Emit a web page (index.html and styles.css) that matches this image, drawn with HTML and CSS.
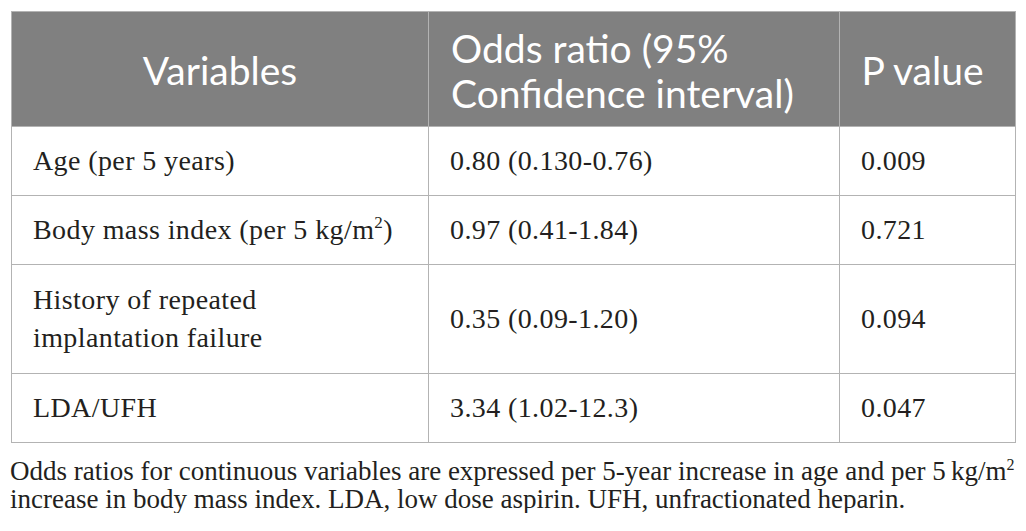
FILE: index.html
```html
<!DOCTYPE html>
<html>
<head>
<meta charset="utf-8">
<link rel="stylesheet" href="styles.css">
</head>
<body>
<div class="page">
  <table class="data">
    <colgroup>
      <col class="c1"><col class="c2"><col class="c3">
    </colgroup>
    <thead>
      <tr class="head">
        <th class="center">Variables</th>
        <th class="left">Odds ratio (95%<br>Confidence interval)</th>
        <th class="center pcol">P value</th>
      </tr>
    </thead>
    <tbody>
      <tr class="row">
        <td>Age (per 5 years)</td>
        <td>0.80 (0.130-0.76)</td>
        <td>0.009</td>
      </tr>
      <tr class="row">
        <td>Body mass index (per 5 kg/m<sup>2</sup>)</td>
        <td>0.97 (0.41-1.84)</td>
        <td>0.721</td>
      </tr>
      <tr class="row tall">
        <td>History of repeated<br>implantation failure</td>
        <td>0.35 (0.09-1.20)</td>
        <td>0.094</td>
      </tr>
      <tr class="row">
        <td>LDA/UFH</td>
        <td>3.34 (1.02-12.3)</td>
        <td>0.047</td>
      </tr>
    </tbody>
  </table>
  <p class="note">Odds ratios for continuous variables are expressed per 5-year increase in age and per 5&#8201;kg/m<span class="sup2">2</span><br>increase in body mass index. LDA, low dose aspirin. UFH, unfractionated heparin.</p>
</div>
</body>
</html>
```
FILE: styles.css
```css
html, body {
  margin: 0;
  padding: 0;
  background: #ffffff;
}
.page {
  padding: 11px 0 0 10px;
  width: 1016px;
}
.data {
  border-collapse: collapse;
  width: 1004px;
  margin-left: 1px;
  table-layout: fixed;
}
.c1 { width: 417px; }
.c2 { width: 411px; }
.c3 { width: 176px; }
.data th, .data td {
  border: 1px solid #b3b3b3;
  vertical-align: middle;
}
.head th {
  background: #808080;
  color: #ffffff;
  font-family: "Lato", "Open Sans", sans-serif;
  font-weight: 400;
  font-size: 39px;
  line-height: 45px;
  height: 115px;
  padding: 3px 22px 0 22px;
  box-sizing: border-box;
  white-space: nowrap;
}
.head th.pcol {
  padding-left: 12px;
  padding-right: 22px;
}
.center { text-align: center; }
.left { text-align: left; }
.row td {
  font-family: "Liberation Serif", "Times New Roman", serif;
  font-size: 28px;
  letter-spacing: 0.4px;
  line-height: 38px;
  color: #231f20;
  height: 69px;
  padding: 0 21px;
  box-sizing: border-box;
  text-align: left;
  white-space: nowrap;
}
.row.tall td { height: 109px; }
.row sup {
  font-size: 17px;
  line-height: 0;
  vertical-align: 11px;
}
.note {
  margin: 14px 0 0 0;
  font-family: "Liberation Serif", "Times New Roman", serif;
  font-size: 27px;
  line-height: 28px;
  color: #231f20;
  white-space: nowrap;
}
.sup2 {
  font-size: 16px;
  line-height: 0;
  vertical-align: 10px;
}
```
